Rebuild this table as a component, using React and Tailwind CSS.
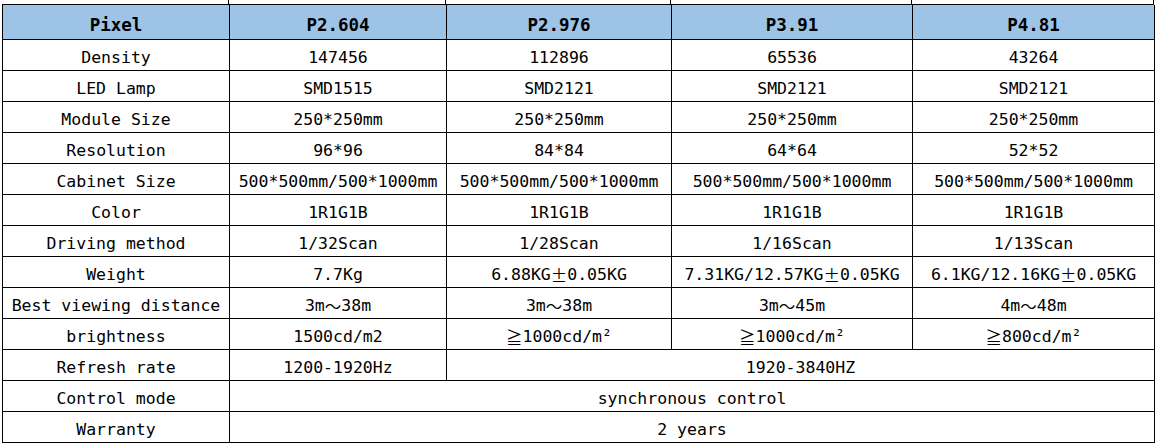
import React from "react";

// spec rows: label + one value per pixel pitch, or a single spanning value
const rows = [
  { label: "Density", values: ["147456", "112896", "65536", "43264"] },
  { label: "LED Lamp", values: ["SMD1515", "SMD2121", "SMD2121", "SMD2121"] },
  { label: "Module Size", values: ["250*250mm", "250*250mm", "250*250mm", "250*250mm"] },
  { label: "Resolution", values: ["96*96", "84*84", "64*64", "52*52"] },
  {
    label: "Cabinet Size",
    values: [
      "500*500mm/500*1000mm",
      "500*500mm/500*1000mm",
      "500*500mm/500*1000mm",
      "500*500mm/500*1000mm",
    ],
  },
  { label: "Color", values: ["1R1G1B", "1R1G1B", "1R1G1B", "1R1G1B"] },
  { label: "Driving method", values: ["1/32Scan", "1/28Scan", "1/16Scan", "1/13Scan"] },
  {
    label: "Weight",
    values: ["7.7Kg", "6.88KG±0.05KG", "7.31KG/12.57KG±0.05KG", "6.1KG/12.16KG±0.05KG"],
  },
  { label: "Best viewing distance", values: ["3m～38m", "3m～38m", "3m～45m", "4m～48m"] },
  { label: "brightness", values: ["1500cd/m2", "≧1000cd/m²", "≧1000cd/m²", "≧800cd/m²"] },
];

const headers = ["Pixel", "P2.604", "P2.976", "P3.91", "P4.81"];

const cell =
  "flex items-center justify-center border-r border-b border-black h-[31px] pt-[7px] whitespace-nowrap";

// wide symbols come from the CJK font, like in the original sheet
function Text({ value }) {
  return value.split(/([～≧±])/).map((part, i) =>
    /^[～≧±]$/.test(part) ? (
      <span key={i} style={{ fontFamily: '"Noto Sans CJK SC", sans-serif' }}>
        {part}
      </span>
    ) : (
      <React.Fragment key={i}>{part}</React.Fragment>
    )
  );
}

function App() {
  return (
    <div
      className="w-[1158px] h-[444px] overflow-hidden bg-white text-black text-[16.5px] leading-none"
      style={{ fontFamily: '"DejaVu Sans Mono", "Liberation Mono", monospace' }}
    >
      {/* cut-off row above the table */}
      <div className="ml-[2px] grid grid-cols-[227px_217px_225px_241px_242px] h-[4px]">
        {headers.map((h) => (
          <div key={h} className="border-r border-black" />
        ))}
      </div>

      <div className="ml-[2px] w-[1152px] grid grid-cols-[227px_217px_225px_241px_242px] border-l border-t border-black">
        {/* header */}
        {headers.map((h) => (
          <div
            key={h}
            className="flex items-center justify-center h-[35px] pt-[7px] border-r border-b border-black bg-[#9dc3e6] font-bold text-[17.5px]"
          >
            {h}
          </div>
        ))}

        {rows.map((row) => (
          <React.Fragment key={row.label}>
            <div className={cell}>{row.label}</div>
            {row.values.map((v, i) => (
              <div key={i} className={cell}>
                <Text value={v} />
              </div>
            ))}
          </React.Fragment>
        ))}

        <div className={cell}>Refresh rate</div>
        <div className={cell}>1200-1920Hz</div>
        <div className={`${cell} col-span-3`}>1920-3840HZ</div>

        <div className={cell}>Control mode</div>
        <div className={`${cell} col-span-4`}>synchronous control</div>

        <div className={cell}>Warranty</div>
        <div className={`${cell} col-span-4`}>2 years</div>
      </div>
    </div>
  );
}

export default App;
